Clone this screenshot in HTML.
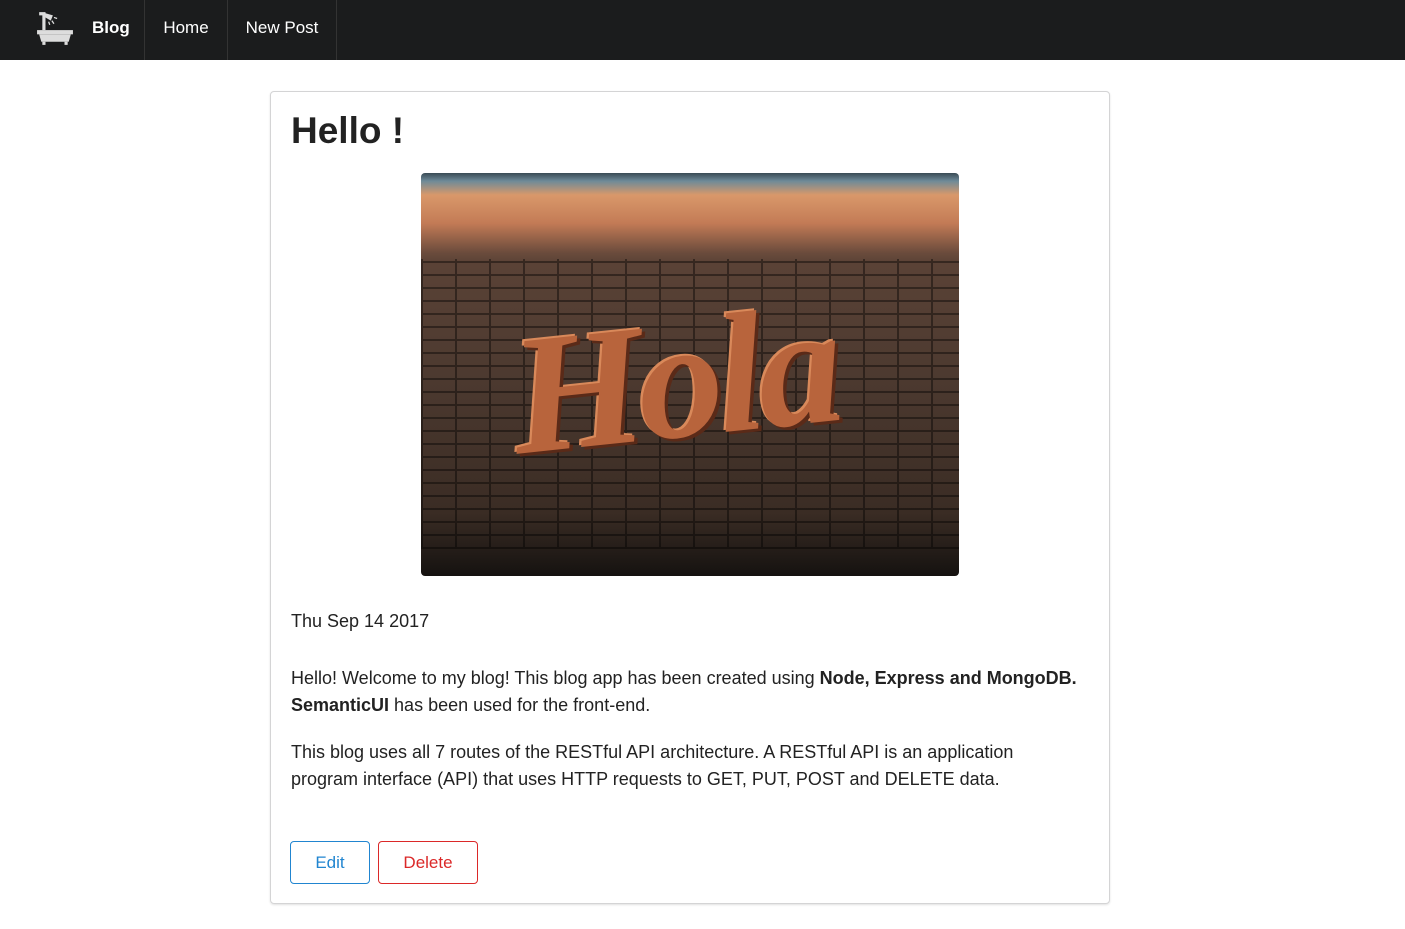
<!DOCTYPE html>
<html><head><meta charset="utf-8"><style>
*{box-sizing:border-box;margin:0;padding:0}
body{width:1405px;height:929px;background:#fff;font-family:"Liberation Sans",sans-serif;color:#222;overflow:hidden;position:relative}
.nav{position:absolute;left:0;top:0;width:1405px;height:60px;background:#1b1c1d;color:#fff}
.nav .it{position:absolute;top:0;height:60px;line-height:56px;font-size:17px;border-right:1px solid #333}
.card{position:absolute;left:270px;top:91px;width:840px;height:813px;border:1px solid #d4d4d5;border-radius:4px;box-shadow:0 1px 2px rgba(0,0,0,.12)}
h1{position:absolute;left:20px;top:18px;font-size:37px;font-weight:bold;color:#222}
.img{position:absolute;left:150px;top:81px;width:538px;height:403px;border-radius:4px;overflow:hidden;
background:linear-gradient(#3a4b55 0,#6e8a98 8px,#d9986a 22px,#c37b56 50px,#6a4b3c 80px,#5a4236 90px,#4d3a30 200px,#3a2c24 340px,#151210 403px)}
.brick{position:absolute;left:0;top:86px;width:538px;height:290px;opacity:.4;
background:repeating-linear-gradient(0deg,#000 0 2px,transparent 2px 13px),repeating-linear-gradient(90deg,#000 0 2px,transparent 2px 34px)}
.hola{position:absolute;left:90px;top:110px;font-family:"Liberation Serif",serif;font-style:italic;font-weight:bold;font-size:170px;color:#b8643c;text-shadow:3px 3px 0 #5a2a18,-2px -2px 0 #d9895a;letter-spacing:-6px;transform:rotate(-6deg)}
.p{position:absolute;left:20px;font-size:18px;line-height:27px;color:#222}
.btn{position:absolute;top:749px;height:43px;border-radius:4px;font-size:17px;line-height:41px;text-align:center;background:#fff}
</style></head><body>
<div class="nav">
<div class="it" style="left:0;width:145px">
<svg style="position:absolute;left:36px;top:9px" width="38" height="38" viewBox="0 0 36 36"><path d="M3 3h6v17H6V6H3z" fill="#ddd"/><path d="M9 4l7 2-2 5-5-3z" fill="#ddd"/><path d="M15 11l2 3M12 12l1 3M17 8l3 1" stroke="#ddd" stroke-width="1.2"/><rect x="1" y="20" width="34" height="4" fill="#ddd"/><path d="M3 24h30l-2 7H5z" fill="#ddd"/><rect x="6" y="31" width="3" height="3" fill="#ddd"/><rect x="27" y="31" width="3" height="3" fill="#ddd"/></svg>
<span style="position:absolute;left:92px;font-weight:bold">Blog</span></div>
<div class="it" style="left:145px;width:83px;text-align:center">Home</div>
<div class="it" style="left:228px;width:109px;text-align:center">New Post</div>
</div>
<div class="card">
<h1>Hello !</h1>
<div class="img"><div class="brick"></div><div class="hola">Hola</div></div>
<div class="p" style="top:516px">Thu Sep 14 2017</div>
<div class="p" style="top:573px;width:810px">Hello! Welcome to my blog! This blog app has been created using <b>Node, Express and MongoDB. SemanticUI</b> has been used for the front-end.</div>
<div class="p" style="top:647px;width:760px">This blog uses all 7 routes of the RESTful API architecture. A RESTful API is an application program interface (API) that uses HTTP requests to GET, PUT, POST and DELETE data.</div>
<div class="btn" style="left:19px;width:80px;border:1px solid #2185d0;color:#2185d0">Edit</div>
<div class="btn" style="left:107px;width:100px;border:1px solid #db2828;color:#db2828">Delete</div>
</div>
</body></html>
